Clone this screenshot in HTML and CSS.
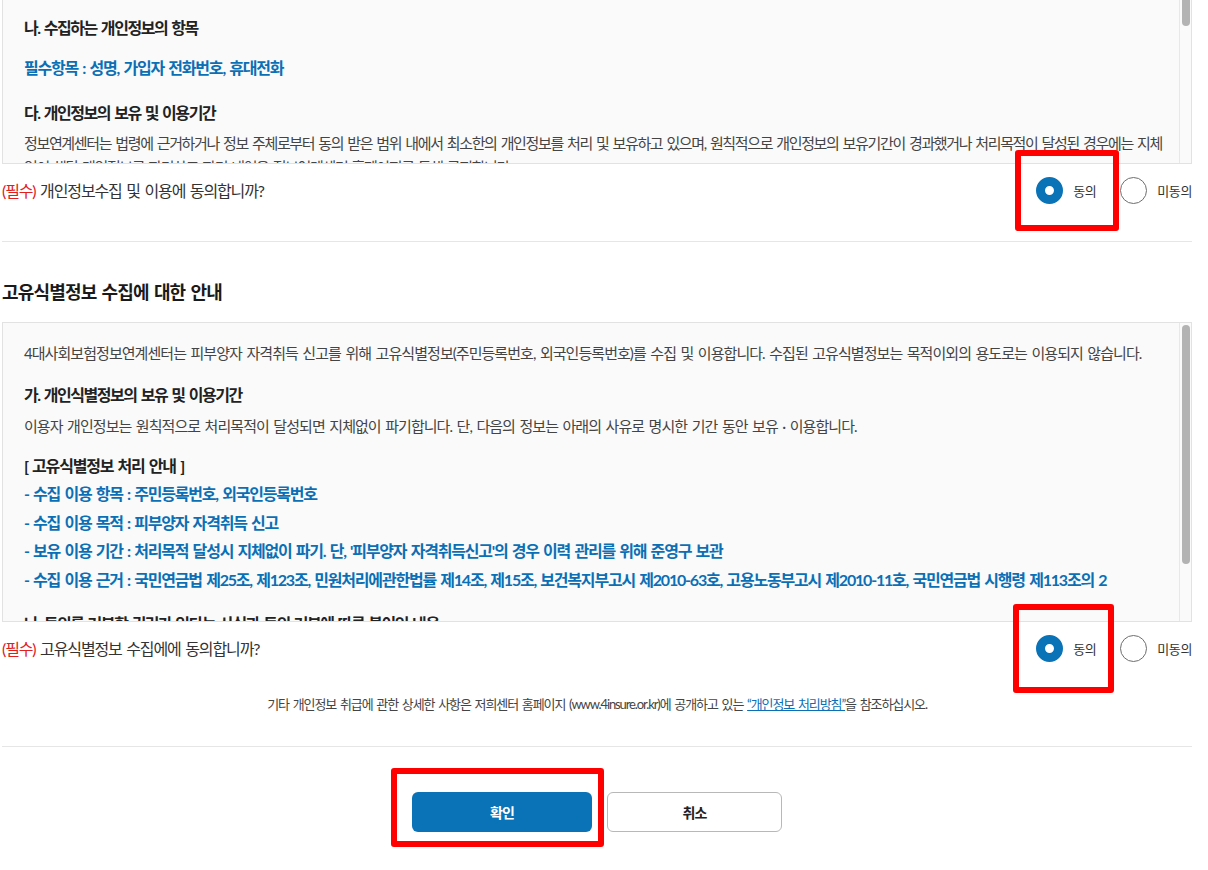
FILE: index.html
```html
<!DOCTYPE html>
<html lang="ko">

<head>
    <meta charset="UTF-8">
    <meta name="viewport" content="width=device-width, initial-scale=1.0">
    <title>개인정보 수집 및 이용 동의</title>
    <link rel="stylesheet" href="styles.css">
</head>

<body>
    <div class="page">
        <!-- 개인정보 수집 및 이용 (스크롤된 상태) -->
        <div class="terms-box terms-box--top">
            <div class="terms-body terms-body--wide">
                <h4 class="terms-h">나. 수집하는 개인정보의 항목</h4>
                <p class="terms-em terms-em--solo">필수항목 : 성명, 가입자 전화번호, 휴대전화</p>
                <h4 class="terms-h terms-h--gap">다. 개인정보의 보유 및 이용기간</h4>
                <p class="terms-p terms-p--dense">정보연계센터는 법령에 근거하거나 정보 주체로부터 동의 받은 범위 내에서 최소한의 개인정보를 처리 및 보유하고 있으며, 원칙적으로 개인정보의 보유기간이 경과했거나 처리목적이 달성된 경우에는 지체 없이 해당 개인정보를 파기하고 파기 내역을 정보연계센터 홈페이지를 통해 공지합니다.</p>
            </div>
            <div class="scroll-track">
                <span class="scroll-thumb scroll-thumb--end"></span>
            </div>
        </div>

        <div class="agree-row">
            <p class="agree-q"><span class="req">(필수)</span> 개인정보수집 및 이용에 동의합니까?</p>
            <div class="agree-opts">
                <label class="opt">
                    <input type="radio" name="agree1" checked>
                    <span>동의</span>
                    <span class="mark mark--first"></span>
                </label>
                <label class="opt">
                    <input type="radio" name="agree1">
                    <span>미동의</span>
                </label>
            </div>
        </div>

        <hr class="divider">

        <h3 class="section-title">고유식별정보 수집에 대한 안내</h3>

        <div class="terms-box">
            <div class="terms-body terms-body--full">
                <p class="terms-p">4대사회보험정보연계센터는 피부양자 자격취득 신고를 위해 고유식별정보(주민등록번호, 외국인등록번호)를 수집 및 이용합니다. 수집된 고유식별정보는 목적이외의 용도로는 이용되지 않습니다.</p>
                <h4 class="terms-h terms-h--mid">가. 개인식별정보의 보유 및 이용기간</h4>
                <p class="terms-p terms-p--tight">이용자 개인정보는 원칙적으로 처리목적이 달성되면 지체없이 파기합니다. 단, 다음의 정보는 아래의 사유로 명시한 기간 동안 보유 · 이용합니다.</p>
                <ul class="terms-list">
                    <li class="terms-list-title">[ 고유식별정보 처리 안내 ]</li>
                    <li>- 수집 이용 항목 : 주민등록번호, 외국인등록번호</li>
                    <li>- 수집 이용 목적 : 피부양자 자격취득 신고</li>
                    <li>- 보유 이용 기간 : 처리목적 달성시 지체없이 파기. 단, '피부양자 자격취득신고'의 경우 이력 관리를 위해 준영구 보관</li>
                    <li>- 수집 이용 근거 : 국민연금법 제25조, 제123조, 민원처리에관한법률 제14조, 제15조, 보건복지부고시 제2010-63호, 고용노동부고시 제2010-11호, 국민연금법 시행령 제113조의 2</li>
                </ul>
                <h4 class="terms-h terms-h--last">나. 동의를 거부할 권리가 있다는 사실과 동의 거부에 따른 불이익 내용</h4>
                <p class="terms-p">이용자는 고유식별정보 수집에 대한 동의를 거부할 권리가 있습니다. 다만, 동의를 거부하는 경우 피부양자 자격취득 신고가 제한될 수 있습니다.</p>
            </div>
            <div class="scroll-track">
                <span class="scroll-thumb"></span>
            </div>
        </div>

        <div class="agree-row">
            <p class="agree-q"><span class="req">(필수)</span> 고유식별정보 수집에에 동의합니까?</p>
            <div class="agree-opts">
                <label class="opt">
                    <input type="radio" name="agree2" checked>
                    <span>동의</span>
                    <span class="mark mark--second"></span>
                </label>
                <label class="opt">
                    <input type="radio" name="agree2">
                    <span>미동의</span>
                </label>
            </div>
        </div>

        <p class="foot-note">기타 개인정보 취급에 관한 상세한 사항은 저희센터 홈페이지 (www.4insure.or.kr)에 공개하고 있는 <a href="#" class="foot-link">“개인정보 처리방침”</a>을 참조하십시오.</p>

        <hr class="divider divider--bottom">

        <div class="btn-row">
            <span class="btn-wrap">
                <button type="button" class="btn btn--primary">확인</button>
                <span class="mark mark--btn"></span>
            </span>
            <button type="button" class="btn btn--line">취소</button>
        </div>
    </div>
</body>

</html>
```

FILE: styles.css
```css
body {
    margin: 0;
    background: #fff;
    color: #333;
    font-family: Lato, "Noto Sans CJK KR", sans-serif;
    letter-spacing: -0.06em;
    word-spacing: 0.1em;
}

p,
h3,
h4,
ul {
    margin: 0;
    padding: 0;
}

.page {
    width: 1190px;
    margin-left: 2px;
    padding-bottom: 60px;
}

/* 약관 박스 */
.terms-box {
    display: flex;
    height: 300px;
    box-sizing: border-box;
    background: #fafafa;
    border: 1px solid #e2e2e2;
}

.terms-box--top {
    height: 164px;
    border-top: 0;
}

.terms-body {
    flex: 1;
    overflow: hidden;
    padding: 16px 10px 0 21px;
    word-break: keep-all;
}

.terms-body--wide {
    padding-right: 4px;
}

.terms-body--full {
    padding-top: 18px;
}

.terms-h {
    font-size: 16px;
    line-height: 24px;
    font-weight: 700;
    letter-spacing: -0.09em;
    color: #222;
}

.terms-h--gap {
    margin-top: 21px;
}

.terms-h--mid {
    margin-top: 18px;
}

.terms-h--last {
    margin-top: 18px;
}

.terms-em {
    font-size: 16px;
    line-height: 24px;
    font-weight: 700;
    letter-spacing: -0.075em;
    color: #0b6fb5;
}

.terms-em--solo {
    margin-top: 16px;
}

.terms-p {
    font-size: 15px;
    line-height: 24px;
    letter-spacing: -0.063em;
    color: #444;
    margin-top: 6px;
}

.terms-p--dense {
    letter-spacing: -0.09em;
}

.terms-body--full > .terms-p:first-child {
    margin-top: 0;
}

.terms-p--tight {
    margin-top: 7px;
}

.terms-list {
    list-style: none;
    margin-top: 14px;
}

.terms-list li {
    font-size: 16px;
    line-height: 28.4px;
    font-weight: 700;
    letter-spacing: -0.075em;
    color: #0b6fb5;
}

.terms-list .terms-list-title {
    color: #222;
}

/* 스크롤바 */
.scroll-track {
    width: 12px;
    flex: none;
    overflow: hidden;
    border-left: 1px solid #e8e8e8;
    padding: 2px 0 0 2px;
    box-sizing: border-box;
}

.scroll-thumb {
    display: block;
    width: 8px;
    height: 239px;
    border-radius: 4px;
    background: #b3b3b3;
}

.scroll-thumb--end {
    margin-top: -40px;
    height: 64px;
}

/* 동의 선택 */
.agree-row {
    display: flex;
    align-items: center;
    justify-content: space-between;
    height: 52px;
}

.agree-q {
    font-size: 16px;
    letter-spacing: -0.07em;
    color: #333;
}

.req {
    color: #e0201e;
}

.agree-opts {
    display: flex;
    align-items: center;
    gap: 24px;
}

.opt {
    position: relative;
    display: flex;
    align-items: center;
    gap: 10px;
    font-size: 13px;
    letter-spacing: -0.03em;
    color: #333;
}

.opt input {
    appearance: none;
    -webkit-appearance: none;
    margin: 0;
    width: 27px;
    height: 27px;
    box-sizing: border-box;
    border-radius: 50%;
    border: 1px solid #6e6e6e;
    background: #fff;
}

.opt input:checked {
    border: 9px solid #0a73b8;
}

/* 빨간 강조 표시 */
.mark {
    position: absolute;
    box-sizing: border-box;
    border: 6px solid #ff0000;
    border-radius: 3px;
    pointer-events: none;
}

.mark--first {
    left: -21px;
    top: -27px;
    width: 104px;
    height: 81px;
}

.mark--second {
    left: -23px;
    top: -31px;
    width: 101px;
    height: 89px;
}

.mark--btn {
    left: -21px;
    top: -24px;
    width: 213px;
    height: 79px;
}

.divider {
    margin: 25px 0 0;
    border: 0;
    border-top: 1px solid #e6e6e6;
}

.section-title {
    margin: 37px 0 17px;
    font-size: 18px;
    line-height: 26px;
    font-weight: 700;
    letter-spacing: -0.046em;
    color: #1a1a1a;
}

.foot-note {
    margin-top: 21px;
    font-size: 13px;
    line-height: 18px;
    letter-spacing: -0.085em;
    text-align: center;
    color: #444;
}

.foot-link {
    color: #0b6fb5;
}

.divider--bottom {
    margin-top: 33px;
}

/* 버튼 */
.btn-row {
    display: flex;
    justify-content: center;
    gap: 15px;
    margin-top: 45px;
}

.btn-wrap {
    position: relative;
    display: flex;
}

.btn {
    height: 40px;
    border-radius: 6px;
    font-family: inherit;
    font-size: 14px;
    font-weight: 700;
    letter-spacing: inherit;
    cursor: pointer;
}

.btn--primary {
    width: 180px;
    border: 0;
    background: #0a73b8;
    color: #fff;
}

.btn--line {
    width: 175px;
    border: 1px solid #b8b8b8;
    background: #fff;
    color: #222;
}
```
